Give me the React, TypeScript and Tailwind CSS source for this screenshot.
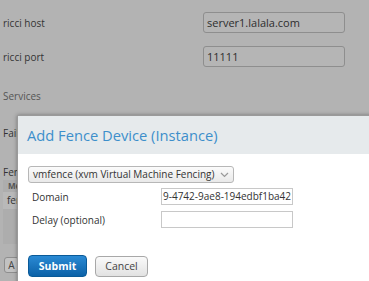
import React from "react";

const sans = "font-['Open_Sans','DejaVu_Sans',sans-serif]";

function PageRow({ label, value }: { label: string; value: string }) {
  return (
    <div className="flex items-center h-[21px] mb-[13px]">
      <div className="w-[200px] pl-[3px] text-[10px] leading-[16px] text-[#333]">{label}</div>
      <div className="ml-[3px] w-[142px] h-[21px] rounded-[3px] border border-[#8e8e8e] bg-[#b5b5b5] px-[3px] text-[11px] leading-[19px] text-[#2e2e2e]">
        {value}
      </div>
    </div>
  );
}

export default function App() {
  return (
    <div className={`relative w-[369px] h-[281px] overflow-hidden bg-[#b3b3b3] ${sans}`}>
      {/* page behind the dialog (already dimmed) */}
      <div className="-mt-[22px] flex flex-col">
        <PageRow label="" value="" />
        <PageRow label="ricci host" value="server1.lalala.com" />
        <PageRow label="ricci port" value="11111" />
        <div className="pl-[3px] pt-[8px] text-[10px] leading-[16px] text-[#555]">Services</div>
        <div className="pl-[3px] pt-[21px] text-[10px] leading-[16px] text-[#333]">Failover Domain</div>
        <div className="pl-[3px] pt-[23px] text-[10px] leading-[16px] text-[#333]">Fence Devices</div>
        <div className="ml-[3px] w-[60px] bg-[#adadad] flex flex-col">
          <div className="pl-[5px] text-[8px] leading-[12px] font-bold text-[#555]">Method</div>
          <div className="pl-[4px] h-[17px] bg-[#b9b9b9] text-[10px] leading-[17px] text-[#333]">fence</div>
          <div className="h-[35px]" />
        </div>
        <div className="ml-[4px] mt-[13px] w-[15px] h-[16px] rounded-[3px] border border-[#8e8e8e] bg-[#c2c2c2] text-center text-[10px] leading-[14px] text-[#444]">
          A
        </div>
      </div>

      {/* dialog */}
      <div className="absolute left-[17px] top-[115px] w-[400px] h-[200px] bg-white border-l border-t border-[#9a9a9a] shadow-[0_0_4px_rgba(0,0,0,0.35)] flex flex-col">
        <div className="h-[38px] shrink-0 bg-[#e6eaec] pl-[9px] flex items-center">
          <span className="text-[14.7px] leading-[20px] text-[#3d8fcb]">Add Fence Device (Instance)</span>
        </div>
        <div className="pl-[10px] pt-[12px] flex flex-col">
          <div className="self-start flex items-center h-[17px] rounded-[3px] border border-[#b7b7b7] bg-gradient-to-b from-[#fbfbfb] to-[#e9e9e9] pl-[4px] pr-[4px] text-[10px] text-[#333]">
            <span className="leading-[15px]">vmfence (xvm Virtual Machine Fencing)</span>
            <svg width="9" height="6" viewBox="0 0 9 6" className="ml-[6px]">
              <path d="M1 1 L4.5 4.5 L8 1" fill="none" stroke="#999" strokeWidth="1.2" />
            </svg>
          </div>
          <div className="flex items-center mt-[5px] h-[17px]">
            <div className="w-[133px] pl-[4px] text-[10px] leading-[16px] text-[#333]">Domain</div>
            <div className="w-[132px] h-[17px] border border-[#c8c8c8] px-[1px] text-[10px] leading-[15px] text-[#333] overflow-hidden whitespace-nowrap">
              9-4742-9ae8-194edbf1ba42
            </div>
          </div>
          <div className="flex items-center mt-[6px] h-[17px]">
            <div className="w-[133px] pl-[4px] text-[10px] leading-[16px] text-[#333]">Delay (optional)</div>
            <div className="w-[132px] h-[17px] border border-[#c8c8c8]" />
          </div>
          <div className="flex items-center gap-[8px] mt-[27px]">
            <button className="w-[59px] h-[22px] rounded-[4px] border border-[#0a5a98] bg-gradient-to-b from-[#2a8ad4] to-[#0b62a8] text-[10.5px] leading-[20px] font-bold text-white">
              Submit
            </button>
            <button className="w-[53px] h-[21px] rounded-[4px] border border-[#a8a8a8] bg-gradient-to-b from-[#fafafa] to-[#e2e2e2] text-[10.5px] leading-[19px] text-[#444]">
              Cancel
            </button>
          </div>
        </div>
      </div>
    </div>
  );
}
